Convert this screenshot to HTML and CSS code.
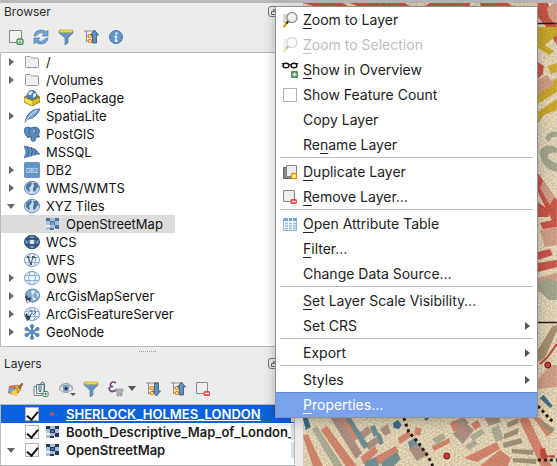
FILE: index.html
```html
<!DOCTYPE html>
<html lang="en">
<head>
<meta charset="utf-8">
<title>Layer context menu</title>
<link rel="stylesheet" href="styles.css">
</head>
<body>
<svg class="defs" aria-hidden="true">
  <defs>
    <symbol id="folder" viewBox="0 0 16 16"><path d="M1.500 3.500q0-1 1-1h3.500l1.500 1.500h6q1 0 1 1v7.500q0 1-1 1h-11q-1 0-1-1z" fill="#f1f1f1" stroke="#9a9a9a"/></symbol>
    <symbol id="package" viewBox="0 0 16 16"><path d="M0 7l8 3v6l-8-4z" fill="#f3d12c"/><path d="M16 7l-8 3v6l8-4z" fill="#d9b51c"/><path d="M0 7l4-3 9 0 3 3-8 3z" fill="#8d7a26"/><circle cx="8" cy="5" r="5" fill="#4d7daf"/><path d="M4 3l3-2 2 1-2 3-2 0zM9 4l3-1 0 3-3 2z" fill="#dbe8f4"/><path d="M0 7l8 3.500v5.500l-8-4z" fill="#fbe03c"/><path d="M16 7l-8 3.500v5.500l8-4z" fill="#e3bd1e"/><path d="M0 7l8 3.500 8-3.500v5l-8 4-8-4z" fill="none" stroke="#6b6230" stroke-width=".7"/></symbol>
    <symbol id="feather" viewBox="0 0 16 16"><path d="M1 15C2 7 7 1 16 1c-2 4-5 9-12 10z" fill="#78a8d6" stroke="#40678f"/><path d="M1 15C4 9 8 5 13 2" fill="none" stroke="#e5f0fa"/></symbol>
    <symbol id="elephant" viewBox="0 0 16 16"><path d="M1 2q3-2 6 0 4-2 7 0 3 2 0 8l2 0q-1 2-4 1l-1 4q-3 1-4-1l0-4-2 1-1 1Q1 9 0 5z" fill="#5a8cbf" stroke="#365c86" stroke-width=".8"/><path d="M6 2q-2 3 0 7M11 2q2 3 0 7M4 11l3 0" fill="none" stroke="#3c6592" stroke-width=".8"/><circle cx="10" cy="5" r=".7" fill="#fff"/></symbol>
    <symbol id="mssql" viewBox="0 0 16 16"><path d="M0 2l5 1 6 2 5 5-6 1-10 3 2-6z" fill="#5e8fc4"/><path d="M3 2q3 5 0 11M7 3q3 4 0 9M11 5q2 3 0 6" fill="none" stroke="#2e5480" stroke-width=".8"/><path d="M0 2l5 1 6 2 5 5-6 1-10 3 2-6z" fill="none" stroke="#41699a" stroke-width=".6"/></symbol>
    <symbol id="db2" viewBox="0 0 16 16"><rect width="16" height="16" rx="1.500" fill="#6596c9"/><text x="8" y="10.500" class="db2-text">DB2</text></symbol>
    <symbol id="globe" viewBox="0 0 16 16"><ellipse cx="8" cy="8" rx="7.500" ry="6.700" fill="#c8dcf0" stroke="#5d8bbd"/><path d="M2 5l4-3 2 1-1 3-2 2 1 3-1 1-3-3zM9 3l4 0 2 4-2 1-2 4-2-1 0-3 1-2z" fill="#50779f"/></symbol>
    <symbol id="globe-dark" viewBox="0 0 16 16"><ellipse cx="8" cy="8" rx="7.500" ry="6.700" fill="#557fae" stroke="#2e5079"/><path d="M1 5h14M1 11h14M5 2q-3 6 0 12M11 2q3 6 0 12" fill="none" stroke="#263f60"/><path d="M6 6h4v4h-4z" fill="#dbe9f7"/><path d="M2 8h2M12 8h2M7 3h2M7 13h2" stroke="#a9c8e8"/></symbol>
    <symbol id="globe-line" viewBox="0 0 16 16"><ellipse cx="8" cy="8" rx="7.500" ry="6.500" fill="#f1f7fd" stroke="#6b9bd0"/><path d="M1 5.500h14M1 10.500h14M6 2q-3 6 0 12M10 2q3 6 0 12" fill="none" stroke="#7fabdc" stroke-width=".9"/></symbol>
    <symbol id="globe-v" viewBox="0 0 16 16"><use href="#globe-line"/><path d="M4 5l3 7 2-7 3 1" fill="none" stroke="#4c5660" stroke-width="1"/><path d="M3 4h2v2h-2zM6 11h2v2h-2zM8 4h2v2h-2z" fill="#4c5660"/></symbol>
    <symbol id="arc-map" viewBox="0 0 16 16"><ellipse cx="8.500" cy="7.500" rx="7" ry="6.500" fill="#83a9d0" stroke="#4e7cad"/><path d="M7 3l3-1 1 2-3 4 4 3-3 2zM12 4l3 2-1 4z" fill="#e2edf7"/><path d="M1 9l2-2 1 3 3-1-1 4-3 2z" fill="#38424d"/><path d="M3 12h2v2h-2z" fill="#ccd"/></symbol>
    <symbol id="arc-feature" viewBox="0 0 16 16"><use href="#globe-line"/><path d="M6 5l2-1 0 4-2 1M10 4l2 2-3 3" fill="none" stroke="#5e6872"/><path d="M1 9l2-2 1 3 3-1-1 4-3 2z" fill="#38424d"/></symbol>
    <symbol id="geonode" viewBox="0 0 16 16"><path d="M8 2v12M2.500 5l11 6M13.500 5l-11 6" stroke="#5b8dc0" stroke-width="2.200"/><g fill="#5b8dc0" stroke="#42709f" stroke-width=".6"><circle cx="8" cy="2.200" r="1.800"/><circle cx="8" cy="13.800" r="1.800"/><circle cx="2.600" cy="5" r="1.800"/><circle cx="13.400" cy="5" r="1.800"/><circle cx="2.600" cy="11" r="1.800"/><circle cx="13.400" cy="11" r="1.800"/></g></symbol>
    <symbol id="raster" viewBox="0 0 16 16"><path d="M0 2h13v12h-13z" fill="#eef3f9"/><path d="M0 2h4v3h-4zM9 2h4v3h-4zM4 5h5v4h-5zM9 9h4v4h-4zM4 11h4v3h-4z" fill="#526f96"/><path d="M4 2h5v3h-5zM0 5h4v4h-4zM9 5h4v4h-4zM4 9h5v3h-5zM0 11h4v3h-4z" fill="#a5c0dd"/><path d="M5 6h3v3h-3z" fill="#7ba0cb"/></symbol>
    <symbol id="raster-dark" viewBox="0 0 16 16"><path d="M0 2h13v12h-13z" fill="#eef3f9"/><path d="M0 2h4v3h-4zM9 2h4v3h-4zM4 5h5v4h-5zM9 9h4v4h-4zM4 12h4v2h-4z" fill="#26384f"/><path d="M4 2h5v3h-5zM0 5h4v4h-4zM9 5h4v4h-4zM4 9h5v3h-5zM0 11h4v3h-4z" fill="#a5c0dd"/><path d="M5 6h3v2h-3z" fill="#4d6f9b"/></symbol>
    <symbol id="new-layer" viewBox="0 0 16 16"><path d="M1.500 1.500h12v12h-12z" fill="#f2f2f0" stroke="#85887f"/><rect x="9" y="10" width="6" height="5.500" rx="2" fill="#fff" stroke="#3d8b4b" stroke-width="1.300"/><path d="M12 11v4M10 13h4" stroke="#58a765"/></symbol>
    <symbol id="refresh" viewBox="0 0 16 16"><path d="M1 7q1-6 7-6 4 0 5 2l2-2v6h-6l2-2q-3-3-6 0-1 2-4 2z" fill="#6fa0d8" stroke="#4474aa" stroke-width=".6"/><path d="M15 9q-1 6-7 6-4 0-5-2l-2 2v-6h6l-2 2q3 3 6 0 1-2 4-2z" fill="#6fa0d8" stroke="#4474aa" stroke-width=".6"/></symbol>
    <symbol id="filter" viewBox="0 0 16 16"><path d="M1 2h14v2l-5 5v5l-3 2v-7l-6-5z" fill="#6795c6" stroke="#466f9d" stroke-width=".6"/><path d="M1.500 1h13v2.500h-13z" fill="#f4dc32" stroke="#b7a330" stroke-width=".6"/></symbol>
    <symbol id="collapse" viewBox="0 0 16 16"><path d="M1 2h11M3.500 2v11M3 7h3M3 12h3" fill="none" stroke="#8c8c86"/><path d="M5.500 5.500h3v3h-3zM5.500 10.500h3v3h-3z" fill="#ffe08b" stroke="#f18a16"/><path d="M11.500 1l4 5h-2v8h-4v-8h-2z" fill="#5e90c4" stroke="#315379" stroke-width=".8"/></symbol>
    <symbol id="expand" viewBox="0 0 16 16"><path d="M1 2h13M3.500 2v11M3 7h3M3 12h3" fill="none" stroke="#8c8c86"/><path d="M5.500 5.500h3v3h-3zM5.500 10.500h3v3h-3z" fill="#ffe08b" stroke="#f18a16"/><path d="M11.500 15l4-5h-2v-8h-4v8h-2z" fill="#5e90c4" stroke="#315379" stroke-width=".8"/></symbol>
    <symbol id="info" viewBox="0 0 16 16"><circle cx="8" cy="8" r="6.500" fill="#6597cf" stroke="#4477ae"/><path d="M8.500 3.500v2" stroke="#fff" stroke-width="2"/><path d="M6.500 7.500h2l-1 4.500h2" fill="none" stroke="#fff" stroke-width="1.300"/></symbol>
    <symbol id="brush" viewBox="0 0 16 16"><path d="M1 5l6-1 3 7-5 3-5-2z" fill="#e76552"/><path d="M1 8l4-2 2 4-3 3-4-2z" fill="#68a2dd"/><path d="M3 11l5-3 3 2-2 5-5-1z" fill="#f3ce42"/><path d="M6 5l4-1 3 4-3 4q0-4-4-7z" fill="#e9b34b" stroke="#966628" stroke-width=".7"/><path d="M10 6l4-4 1 1-3 5z" fill="#a66e35" stroke="#7b5028" stroke-width=".6"/></symbol>
    <symbol id="group" viewBox="0 0 16 16"><path d="M1 5.500h8v9h-8z" fill="#e9eeee" stroke="#78807e"/><path d="M3.500 3.500h8v9h-8z" fill="#edf1f1" stroke="#78807e"/><path d="M6 3v7q1 2 2 0v-8q1-2 3 0v9" fill="none" stroke="#41688f"/><rect x="10" y="10.500" width="5" height="5" rx="1" fill="#fff" stroke="#3d8b4b"/><path d="M12.500 11.500v3M11 13h3" stroke="#3d8b4b"/></symbol>
    <symbol id="eye" viewBox="0 0 18 16"><path d="M1 8q7-8 14 0-7 7-14 0z" fill="#fafafa" stroke="#858d91"/><circle cx="8" cy="7.500" r="3.300" fill="#6b9bc7"/><circle cx="8" cy="7.500" r="1.500" fill="#24364c"/><path d="M1 6q7-7 14 0" fill="none" stroke="#8a9295"/><path d="M12 12h6l-3 3z" fill="#555"/></symbol>
    <symbol id="epsilon" viewBox="0 0 16 16"><path d="M8 2Q5 0 3 2q-2 3 2 3.500Q0 6 1.500 9 4 12 8 9" fill="none" stroke="#71478a" stroke-width="1.700"/><path d="M8 8h7v2l-1 1v4h-2v-3h-1v3h-2v-4l-1-1z" fill="#b2b2b2" stroke="#888" stroke-width=".6"/></symbol>
    <symbol id="remove" viewBox="0 0 16 16"><path d="M1.500 1.500h11v11h-11z" fill="#eeeeec" stroke="#888a85"/><rect x="8.500" y="10" width="6.500" height="5" rx="1.500" fill="#ee4b4b"/><path d="M10 12.500h4" stroke="#fff" stroke-width="1.300"/></symbol>
    <symbol id="zoom" viewBox="0 0 16 16"><path d="M1 2h9v9h-9z" fill="#d8d6ce"/><path d="M5.500 10l-4 5" stroke="#d8a618" stroke-width="2.500"/><path d="M6.500 9l-2 2.500" stroke="#222" stroke-width="2"/><circle cx="10" cy="5.500" r="5" fill="#eef0ed" fill-opacity=".9" stroke="#8b8d88" stroke-width="1.200"/><path d="M7 5q1-3 4-2" fill="none" stroke="#fff"/></symbol>
    <symbol id="glasses" viewBox="0 0 16 16"><path d="M0 1.500h3M13 1.500h3M7 3q1-1 2 0" fill="none" stroke="#111"/><ellipse cx="4" cy="3.500" rx="3" ry="2.300" fill="#fff" stroke="#111" stroke-width="1.400"/><ellipse cx="12" cy="3.500" rx="3" ry="2.300" fill="#fff" stroke="#111" stroke-width="1.400"/><rect x="9" y="9" width="7" height="7" rx="1" fill="#4c9159"/><path d="M12.500 10.500v4M10.500 12.500h4" stroke="#fff" stroke-width="1.300"/></symbol>
    <symbol id="duplicate" viewBox="0 0 16 16"><path d="M1.500 3.500h10v11h-10z" fill="#8a8c86" stroke="#666861"/><path d="M4.500 1.500h10v11h-10z" fill="#eeeeec" stroke="#85877f"/><rect x="9.500" y="9.500" width="5" height="5" rx="1" fill="#fff5a8" stroke="#c79d0a" stroke-width="1.300"/></symbol>
    <symbol id="table" viewBox="0 0 16 16"><path d="M1.500 2.500h13v12h-13z" fill="#edf4fb" stroke="#91b5db"/><path d="M2 2h13v3h-13z" fill="#75a4d6"/><path d="M3 7.500h3M7 7.500h3M11 7.500h3M3 10h3M7 10h3M11 10h3M3 12.500h3M7 12.500h3M11 12.500h3" stroke="#9cbfe4" stroke-width="1.300"/><path d="M6.500 2v12M10.500 2v12" stroke="#fff"/></symbol>
    <symbol id="float" viewBox="0 0 12 12"><rect x=".5" y=".5" width="11" height="10" rx="2.500" fill="#eee" stroke="#777"/><path d="M3.500 5.500h4v3h-4zM5.500 5.500v-2h4v3h-2" fill="none" stroke="#666"/></symbol>
    <symbol id="close" viewBox="0 0 12 12"><rect x=".5" y=".5" width="11" height="10" rx="2.500" fill="#eee" stroke="#777"/><path d="M4 3.500l4 4M8 3.500l-4 4" stroke="#666"/></symbol>
  </defs>
</svg>

<main class="workspace">
  <aside class="sidebar">
    <section class="panel panel-browser">
      <header class="panel-head"><h2>Browser</h2><span class="panel-actions"><button aria-label="Float panel"><svg><use href="#float"/></svg></button><button aria-label="Close panel"><svg><use href="#close"/></svg></button></span></header>
      <div class="toolbar">
        <button aria-label="Add layer"><svg><use href="#new-layer"/></svg></button>
        <button aria-label="Refresh"><svg><use href="#refresh"/></svg></button>
        <button aria-label="Filter browser"><svg><use href="#filter"/></svg></button>
        <button aria-label="Collapse all"><svg><use href="#collapse"/></svg></button>
        <button aria-label="Properties"><svg><use href="#info"/></svg></button>
      </div>
      <ul class="tree">
        <li><button class="twist" aria-label="Expand"></button><svg><use href="#folder"/></svg><span>/</span></li>
        <li><button class="twist" aria-label="Expand"></button><svg><use href="#folder"/></svg><span>/Volumes</span></li>
        <li><i class="twist-gap"></i><svg><use href="#package"/></svg><span>GeoPackage</span></li>
        <li><button class="twist" aria-label="Expand"></button><svg><use href="#feather"/></svg><span>SpatiaLite</span></li>
        <li><i class="twist-gap"></i><svg><use href="#elephant"/></svg><span>PostGIS</span></li>
        <li><i class="twist-gap"></i><svg><use href="#mssql"/></svg><span>MSSQL</span></li>
        <li><button class="twist" aria-label="Expand"></button><svg><use href="#db2"/></svg><span>DB2</span></li>
        <li><button class="twist" aria-label="Expand"></button><svg><use href="#globe"/></svg><span>WMS/WMTS</span></li>
        <li><button class="twist open" aria-label="Collapse"></button><svg><use href="#globe"/></svg><span>XYZ Tiles</span></li>
        <li class="child current"><i class="twist-gap"></i><svg><use href="#raster"/></svg><span>OpenStreetMap</span></li>
        <li><i class="twist-gap"></i><svg><use href="#globe-dark"/></svg><span>WCS</span></li>
        <li><i class="twist-gap"></i><svg><use href="#globe-v"/></svg><span>WFS</span></li>
        <li><button class="twist" aria-label="Expand"></button><svg><use href="#globe-line"/></svg><span>OWS</span></li>
        <li><button class="twist" aria-label="Expand"></button><svg><use href="#arc-map"/></svg><span>ArcGisMapServer</span></li>
        <li><button class="twist" aria-label="Expand"></button><svg><use href="#arc-feature"/></svg><span>ArcGisFeatureServer</span></li>
        <li><button class="twist" aria-label="Expand"></button><svg><use href="#geonode"/></svg><span>GeoNode</span></li>
      </ul>
    </section>
    <div class="splitter"></div>
    <section class="panel panel-layers">
      <header class="panel-head"><h2>Layers</h2><span class="panel-actions"><button aria-label="Float panel"><svg><use href="#float"/></svg></button><button aria-label="Close panel"><svg><use href="#close"/></svg></button></span></header>
      <div class="toolbar">
        <button aria-label="Layer styling"><svg><use href="#brush"/></svg></button>
        <button aria-label="Add group"><svg><use href="#group"/></svg></button>
        <button aria-label="Map themes"><svg class="wide"><use href="#eye"/></svg></button>
        <button aria-label="Filter legend"><svg><use href="#filter"/></svg></button>
        <button aria-label="Filter by expression" class="with-arrow"><svg><use href="#epsilon"/></svg></button>
        <button aria-label="Expand all"><svg><use href="#expand"/></svg></button>
        <button aria-label="Collapse all"><svg><use href="#collapse"/></svg></button>
        <button aria-label="Remove layer"><svg><use href="#remove"/></svg></button>
      </div>
      <ul class="tree layers">
        <li class="selected"><i class="twist-gap"></i><input type="checkbox" id="l1" checked><i class="point"></i><label for="l1">SHERLOCK_HOLMES_LONDON</label></li>
        <li><i class="twist-gap"></i><input type="checkbox" id="l2" checked><svg><use href="#raster-dark"/></svg><label for="l2">Booth_Descriptive_Map_of_London_I</label></li>
        <li><button class="twist open" aria-label="Collapse"></button><input type="checkbox" id="l3" checked><svg><use href="#raster-dark"/></svg><label for="l3">OpenStreetMap</label></li>
      </ul>
    </section>
  </aside>

  <section class="map" aria-label="Map canvas">
    <svg viewBox="303 3 254 463" preserveAspectRatio="xMaxYMin slice">
      <defs>
        <pattern id="lots" width="5" height="7" patternUnits="userSpaceOnUse" patternTransform="rotate(-32)"><path d="M0 .5h4M1 1v3h3v2" fill="none" stroke="#625c48" stroke-opacity=".3" stroke-width=".7"/></pattern>
        <filter id="paper" x="0" y="0" width="100%" height="100%"><feTurbulence type="fractalNoise" baseFrequency=".6" numOctaves="2" seed="4"/><feColorMatrix values="0 0 0 0 .35  0 0 0 0 .3  0 0 0 0 .22  1.200 0 0 0 -.5"/></filter>
      </defs>
      <path d="M303 3h254v463h-254z" fill="#efdfbf"/>
      <g fill="#d14a3d"><path d="M303 3h40l8 5h-30zM350 3h55l10 6h-50zM430 3h40v6h-50zM480 3h28l9 6h-35zM538 3h10l9 22v20l-12-20-7-8zM538 62l6 4-1 8-5 5zM538 173l19 27v22h-4l-15-30zM538 202l11 8v7h-11zM540 223l17-4v8l-14 2zM538 252l12-3 3 6-15 5zM538 263l19-3v7l-19 5z"/></g>
      <g fill="#d3ac1e"><path d="M538 27h19v8l-12 10 9 6-4 4-12-7zM548 66l9-3v9l-6 2zM538 91l19-13v14l-19 12zM538 112l19-13v11l-13 5-6 9z"/></g>
      <g fill="#dba08a"><path d="M547 8l7-5h3v23l-8-9zM538 80l9-5 8 9-17 10zM543 181l12 16-5 8-10-17zM540 230l17-3v18l-12 2zM538 278l19-5v12l-8-4-11 12zM538 380l12-15 7 0v22l-19 2z"/></g>
      <g fill="#a5a892"><path d="M545 138q5-8 12-6v5q-6-1-8 5zM540 151q6-9 17-3v5q-9-2-9 5 8 6 9 4v10q-16-3-17-21z"/><path d="M538 285l11-7 8 4v18h-8l-9-8z"/></g>
      <path d="M538 350l14-23 5-2v6l-12 27-7 4z" fill="#a88e6f"/>
      <path d="M540 364l7-6 10-14" fill="none" stroke="#c43b34" stroke-width="2"/>
      <g fill="#b08f86"><path d="M330 417h11l21 36-6 6zM453 434l12-12 9 8-11 14zM409 449l10-5 10 10-12 7zM358 434l10-8 4 6-10 8zM365 444l16-10 2 6-14 10zM380 429l8-5 3 9-6 3zM485 418l14-1 2 5-12 4zM452 422l12-5 5 6-12 8z"/></g>
      <g fill="#dd8268"><path d="M303 436l5-2 15 32h-10zM321 430l6-4 30 40h-11zM341 417h6l12 21-4 3zM361 457l14-11 3 6-14 13zM375 457l21-11 3 6-20 13h-6zM398 438l11-7 3 5-12 8zM432 446l18-8v5l-16 8zM464 458l33-16 3 7-23 13zM480 466l20-16 11 8-3 8zM519 419l9-2 24 49h-11zM450 423l6-3 3 9-5 3zM471 424l7-4 3 6-6 4zM534 418h7l12 14-6 5zM416 427l6 2-2 7-6-2z"/></g>
      <g fill="#a08f75"><path d="M504 434l15-6-1 6-14 5zM503 443l18-5 2 5-19 5zM512 449l22 1-1 5-21-2zM513 458l24 1-1 5-23-2zM507 423l11-5 1 5-11 5zM543 421l12 8-3 4-12-8z"/></g>
      <g fill="#6a8d96"><path d="M346 418h5l18 28-5 3zM370 427l5-2 4 9-5 3zM408 442l7-4 3 6-8 5zM382 462l15-10 4 7-7 7h-12zM366 461l10-4 3 9h-14zM376 434l4-1 4 10-4 2z"/></g>
      <path d="M303 418h5l3 9-5 3zM393 423l5-3 4 5-3 4-5-1zM540 398l4-3 9 11-3 2zM424 417h7l-5 4z" fill="#2c688a"/>
      <g fill="#b1b09a"><path d="M432 439l11-6 3 5-9 7zM491 429l8-4 5 14-8 3zM465 446l10-6 3 4-9 6zM312 429l5-3 26 40h-9zM470 436l12-7 3 4-12 8z"/></g>
      <path d="M540 449l5-1 3 10-7 1zM541 456l14-1v3z" fill="#cf3b31"/>
      <path d="M303 3h254v463h-254z" fill="url(#lots)"/>
      <path d="M303 3h254v463h-254z" filter="url(#paper)"/>
      <path d="M538 23.500h19M538 322.500h19" stroke="#242018" stroke-width="1.300"/>
      <path d="M404 418l5 14 9 10 10 14 5 10M538 406l16 17" fill="none" stroke="#211d18" stroke-width="3" stroke-dasharray="3 3"/>
      <path d="M538 460h19" stroke="#211d18" stroke-width="3" stroke-dasharray="3 3"/>
      <g fill="#d93535" stroke="#4a2021"><circle cx="548" cy="365" r="3"/><circle cx="447" cy="456" r="3"/></g>
    </svg>
  </section>
</main>

<menu class="context-menu" role="menu">
  <li><button role="menuitem"><svg><use href="#zoom"/></svg><span><u>Z</u>oom to Layer</span></button></li>
  <li><button role="menuitem" disabled><svg><use href="#zoom"/></svg><span><u>Z</u>oom to Selection</span></button></li>
  <li><button role="menuitem"><svg><use href="#glasses"/></svg><span><u>S</u>how in Overview</span></button></li>
  <li><label class="menu-check"><input type="checkbox"><span>Show Feature Count</span></label></li>
  <li><button role="menuitem"><i></i><span>Copy Layer</span></button></li>
  <li><button role="menuitem"><i></i><span>Re<u>n</u>ame Layer</span></button></li>
  <li class="rule" role="separator"></li>
  <li><button role="menuitem"><svg><use href="#duplicate"/></svg><span><u>D</u>uplicate Layer</span></button></li>
  <li><button role="menuitem"><svg><use href="#remove"/></svg><span><u>R</u>emove Layer…</span></button></li>
  <li class="rule" role="separator"></li>
  <li><button role="menuitem"><svg><use href="#table"/></svg><span><u>O</u>pen Attribute Table</span></button></li>
  <li><button role="menuitem"><i></i><span><u>F</u>ilter…</span></button></li>
  <li><button role="menuitem"><i></i><span>Change Data Source…</span></button></li>
  <li class="rule" role="separator"></li>
  <li><button role="menuitem"><i></i><span><u>S</u>et Layer Scale Visibility…</span></button></li>
  <li><button role="menuitem" class="submenu"><i></i><span>Set CRS</span></button></li>
  <li class="rule" role="separator"></li>
  <li><button role="menuitem" class="submenu"><i></i><span>Export</span></button></li>
  <li class="rule" role="separator"></li>
  <li><button role="menuitem" class="submenu"><i></i><span>Styles</span></button></li>
  <li><button role="menuitem" class="active"><i></i><span><u>P</u>roperties…</span></button></li>
</menu>
</body>
</html>
```
FILE: styles.css
```css
* { box-sizing: border-box; }

body {
  margin: 0;
  height: 100vh;
  overflow: hidden;
  position: relative;
  background: #ececec;
  color: #111;
  font: 13px/18px Inter, "Liberation Sans", sans-serif;
}

.defs { position: absolute; width: 0; height: 0; }
.db2-text { font: 6px Inter, sans-serif; fill: #e4effa; text-anchor: middle; }

button {
  margin: 0;
  padding: 0;
  border: 0;
  background: none;
  color: inherit;
  font: inherit;
  text-align: left;
}

ul, menu { margin: 0; padding: 0; list-style: none; }
svg { display: block; width: 16px; height: 16px; flex: none; }

.workspace {
  display: grid;
  grid-template-columns: 53% 1fr;
  gap: 8px;
  height: 100%;
  border-top: 3px solid #b9b8bb;
}

.sidebar { display: flex; flex-direction: column; min-width: 0; min-height: 0; }
.panel { display: flex; flex-direction: column; min-height: 0; }
.panel-layers { flex: 1; }

.panel-head {
  display: flex;
  align-items: center;
  justify-content: space-between;
  height: 18px;
  padding-left: 4px;
}
.panel-head h2 { margin: 0; font-size: 12px; font-weight: 400; color: #2b2b2b; }
.panel-actions { display: flex; gap: 3px; }
.panel-actions svg { width: 12px; height: 12px; }

.toolbar { display: flex; align-items: center; gap: 9px; height: 31px; padding-left: 8px; }
.toolbar .wide { width: 18px; margin-right: -2px; }
.with-arrow { display: flex; align-items: center; gap: 4px; }
.with-arrow::after { content: ""; border: 4px solid transparent; border-top: 5px solid #555; border-bottom: 0; }

.tree {
  overflow: hidden;
  padding-bottom: 5px;
  background: #fff;
  border: 1px solid #b8b8b8;
}
.tree li { display: flex; align-items: center; height: 18px; padding-left: 6px; white-space: nowrap; }
.tree svg { margin-right: 6px; }
.twist, .twist-gap { flex: none; width: 17px; height: 18px; }
.twist::before {
  content: "";
  display: block;
  width: 0;
  margin-left: 2px;
  border: 4px solid transparent;
  border-left: 5px solid #666;
  border-right: 0;
}
.twist.open::before { margin-left: 0; border: 4px solid transparent; border-top: 5px solid #666; border-bottom: 0; }
.tree .child { padding-left: 28px; }
.tree .child svg { margin-right: 4px; }
.tree .current { width: 174px; background: #dcdcdc; }

.splitter { height: 8px; flex: none; display: flex; justify-content: center; align-items: center; }
.splitter::before { content: ""; width: 17px; border-top: 1px dotted #999; }

.layers { flex: 1; font-weight: 600; color: #1d1d1d; }
.layers svg { margin-right: 4px; }
.layers li::after { content: ""; flex: none; width: 3px; height: 16px; margin-left: auto; background: #dedede; }
.layers label { overflow: hidden; }
.layers .selected { background: #0a63dc; color: #fff; }
.selected label { text-decoration: underline; }
.point { flex: none; width: 4px; height: 4px; margin: 0 12px 0 4px; border-radius: 50%; background: #b75b62; }

input[type="checkbox"] {
  appearance: none;
  flex: none;
  width: 14px;
  height: 14px;
  margin: 0;
  background: #fff;
  border: 1px solid #b3b3b3;
}
.tree input { display: grid; place-items: center; margin: 0 7px 0 1px; }
.tree input:checked::before {
  content: "";
  width: 5px;
  height: 9px;
  border: solid #111;
  border-width: 0 2px 2px 0;
  transform: rotate(40deg);
}

.map { min-width: 0; overflow: hidden; }
.map svg { width: 100%; height: 100%; }

.context-menu {
  position: absolute;
  left: 275px;
  top: 6px;
  width: 263px;
  background: #fff;
  border: 1px solid #929292;
  box-shadow: 0 3px 12px #0004;
  color: #222;
  font-size: 14px;
}
.context-menu button, .menu-check {
  display: flex;
  align-items: center;
  gap: 5px;
  width: 100%;
  height: 25px;
  padding: 0 7px 0 6px;
}
.context-menu i { width: 16px; }
.context-menu span { flex: 1; }
.context-menu u { text-underline-offset: 3px; }
.context-menu input { margin: 0 1px; }
.context-menu button:disabled { color: #bdbdbd; }
button:disabled svg { opacity: .35; }
.rule { height: 2px; margin: 0 4px; border-top: 1px solid #bdbdbd; }
.submenu::after { content: ""; border: 4px solid transparent; border-left: 5px solid #555; border-right: 0; }
.context-menu .active { background: #7ba3eb; color: #fff; box-shadow: inset 0 1px #638bd0; }
```
